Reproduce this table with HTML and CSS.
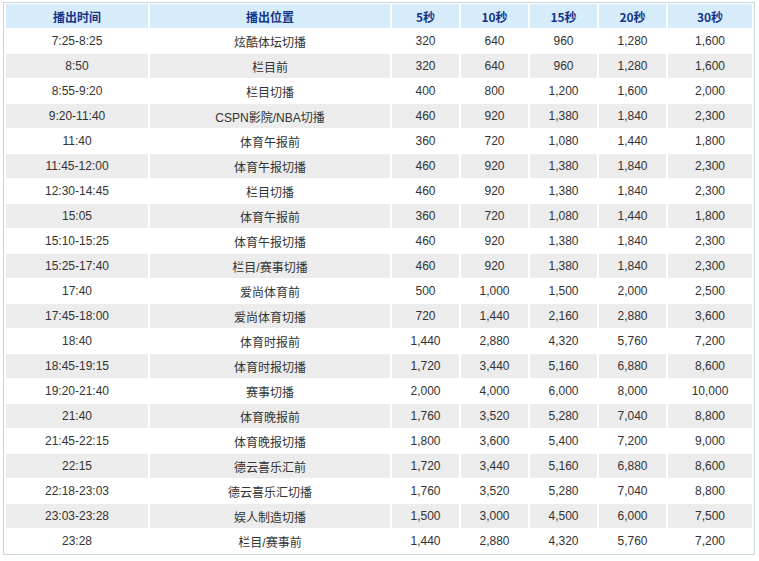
FILE: index.html
```html
<!DOCTYPE html>
<html>
<head>
<meta charset="utf-8">
<link rel="stylesheet" href="styles.css">
</head>
<body>
<div class="wrap">
<table class="price">
<colgroup>
<col class="c-time"><col class="c-pos"><col class="c-n"><col class="c-n"><col class="c-n"><col class="c-n"><col class="c-last">
</colgroup>
<thead>
<tr><th>播出时间</th><th>播出位置</th><th>5秒</th><th>10秒</th><th>15秒</th><th>20秒</th><th>30秒</th></tr>
</thead>
<tbody>
<tr><td>7:25-8:25</td><td>炫酷体坛切播</td><td>320</td><td>640</td><td>960</td><td>1,280</td><td>1,600</td></tr>
<tr class="alt"><td>8:50</td><td>栏目前</td><td>320</td><td>640</td><td>960</td><td>1,280</td><td>1,600</td></tr>
<tr><td>8:55-9:20</td><td>栏目切播</td><td>400</td><td>800</td><td>1,200</td><td>1,600</td><td>2,000</td></tr>
<tr class="alt"><td>9:20-11:40</td><td>CSPN影院/NBA切播</td><td>460</td><td>920</td><td>1,380</td><td>1,840</td><td>2,300</td></tr>
<tr><td>11:40</td><td>体育午报前</td><td>360</td><td>720</td><td>1,080</td><td>1,440</td><td>1,800</td></tr>
<tr class="alt"><td>11:45-12:00</td><td>体育午报切播</td><td>460</td><td>920</td><td>1,380</td><td>1,840</td><td>2,300</td></tr>
<tr><td>12:30-14:45</td><td>栏目切播</td><td>460</td><td>920</td><td>1,380</td><td>1,840</td><td>2,300</td></tr>
<tr class="alt"><td>15:05</td><td>体育午报前</td><td>360</td><td>720</td><td>1,080</td><td>1,440</td><td>1,800</td></tr>
<tr><td>15:10-15:25</td><td>体育午报切播</td><td>460</td><td>920</td><td>1,380</td><td>1,840</td><td>2,300</td></tr>
<tr class="alt"><td>15:25-17:40</td><td>栏目/赛事切播</td><td>460</td><td>920</td><td>1,380</td><td>1,840</td><td>2,300</td></tr>
<tr><td>17:40</td><td>爱尚体育前</td><td>500</td><td>1,000</td><td>1,500</td><td>2,000</td><td>2,500</td></tr>
<tr class="alt"><td>17:45-18:00</td><td>爱尚体育切播</td><td>720</td><td>1,440</td><td>2,160</td><td>2,880</td><td>3,600</td></tr>
<tr><td>18:40</td><td>体育时报前</td><td>1,440</td><td>2,880</td><td>4,320</td><td>5,760</td><td>7,200</td></tr>
<tr class="alt"><td>18:45-19:15</td><td>体育时报切播</td><td>1,720</td><td>3,440</td><td>5,160</td><td>6,880</td><td>8,600</td></tr>
<tr><td>19:20-21:40</td><td>赛事切播</td><td>2,000</td><td>4,000</td><td>6,000</td><td>8,000</td><td>10,000</td></tr>
<tr class="alt"><td>21:40</td><td>体育晚报前</td><td>1,760</td><td>3,520</td><td>5,280</td><td>7,040</td><td>8,800</td></tr>
<tr><td>21:45-22:15</td><td>体育晚报切播</td><td>1,800</td><td>3,600</td><td>5,400</td><td>7,200</td><td>9,000</td></tr>
<tr class="alt"><td>22:15</td><td>德云喜乐汇前</td><td>1,720</td><td>3,440</td><td>5,160</td><td>6,880</td><td>8,600</td></tr>
<tr><td>22:18-23:03</td><td>德云喜乐汇切播</td><td>1,760</td><td>3,520</td><td>5,280</td><td>7,040</td><td>8,800</td></tr>
<tr class="alt"><td>23:03-23:28</td><td>娱人制造切播</td><td>1,500</td><td>3,000</td><td>4,500</td><td>6,000</td><td>7,500</td></tr>
<tr><td>23:28</td><td>栏目/赛事前</td><td>1,440</td><td>2,880</td><td>4,320</td><td>5,760</td><td>7,200</td></tr>
</tbody>
</table>
</div>
</body>
</html>
```
FILE: styles.css
```css
html, body {
  margin: 0;
  padding: 0;
  background: #ffffff;
}
.wrap {
  padding: 2px 0 0 3px;
}
.price {
  width: 752px;
  table-layout: fixed;
  border: 1px solid #c6d6df;
  border-collapse: separate;
  border-spacing: 2px 1px;
  font-family: "Liberation Sans", Arial, "Noto Sans CJK SC", sans-serif;
  font-size: 12px;
  color: #333333;
}
.c-time { width: 142px; }
.c-pos { width: 240px; }
.c-n { width: 67px; }
.c-last { width: 84px; }
.price th {
  height: 24px;
  padding: 0;
  background: #d7ecfa;
  color: #14358a;
  font-family: "Noto Sans CJK SC", sans-serif;
  font-weight: bold;
  font-size: 12px;
  text-align: center;
  vertical-align: middle;
}
.price td {
  height: 24px;
  padding: 0;
  text-align: center;
  vertical-align: middle;
  background: #ffffff;
}
.price tr.alt td {
  background: #ececec;
}
```
